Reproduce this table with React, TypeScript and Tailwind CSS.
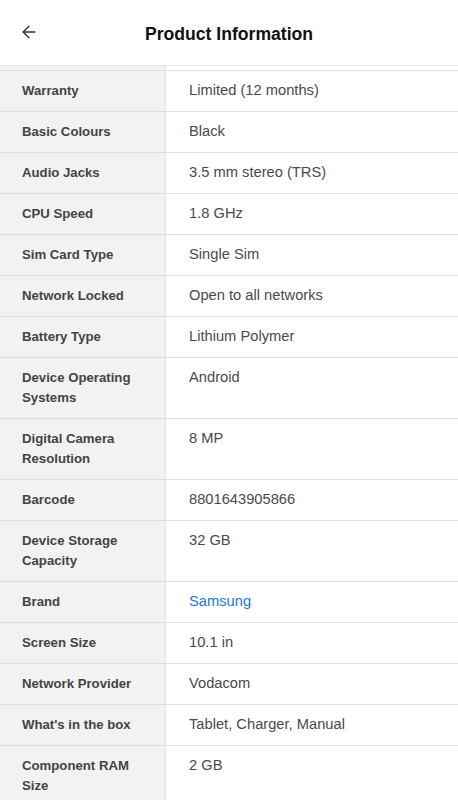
import { ArrowLeft } from 'lucide-react';

const rows: { label: string; value: string; link?: boolean }[] = [
  { label: 'Warranty', value: 'Limited (12 months)' },
  { label: 'Basic Colours', value: 'Black' },
  { label: 'Audio Jacks', value: '3.5 mm stereo (TRS)' },
  { label: 'CPU Speed', value: '1.8 GHz' },
  { label: 'Sim Card Type', value: 'Single Sim' },
  { label: 'Network Locked', value: 'Open to all networks' },
  { label: 'Battery Type', value: 'Lithium Polymer' },
  { label: 'Device Operating Systems', value: 'Android' },
  { label: 'Digital Camera Resolution', value: '8 MP' },
  { label: 'Barcode', value: '8801643905866' },
  { label: 'Device Storage Capacity', value: '32 GB' },
  { label: 'Brand', value: 'Samsung', link: true },
  { label: 'Screen Size', value: '10.1 in' },
  { label: 'Network Provider', value: 'Vodacom' },
  { label: "What's in the box", value: 'Tablet, Charger, Manual' },
  { label: 'Component RAM Size', value: '2 GB' },
];

export default function App() {
  return (
    <div className="w-[458px] h-[800px] overflow-hidden bg-white font-['Liberation_Sans',Arial,sans-serif]">
      <header className="h-[66px] flex items-center relative border-b border-[#e6e6e6]">
        <button className="absolute left-[19px] top-[22px] text-[#333]">
          <ArrowLeft size={20} strokeWidth={1.6} />
        </button>
        <h1 className="w-full text-center text-[17.6px] font-bold text-[#111] mt-[3px]">Product Information</h1>
      </header>
      <div className="h-[4px] flex">
        <div className="w-[166px] bg-[#f2f2f2] border-r border-[#e2e2e2]" />
        <div className="flex-1" />
      </div>
      <div className="border-t border-[#dedede]">
        {rows.map((r) => (
          <div key={r.label} className="flex border-b border-[#dedede] text-[13.2px] leading-[20px]">
            <div className="w-[166px] shrink-0 bg-[#f2f2f2] border-r border-[#e2e2e2] pl-[22px] pr-4 pt-[10px] pb-[10px] font-bold text-[#444]">
              {r.label}
            </div>
            <div className={`flex-1 pl-[23px] pt-[10px] pb-[10px] text-[14.7px] ${r.link ? 'text-[#1a7ad4]' : 'text-[#4a4a4a]'}`}>
              <span className="relative -top-[1px]">{r.value}</span>
            </div>
          </div>
        ))}
      </div>
    </div>
  );
}
